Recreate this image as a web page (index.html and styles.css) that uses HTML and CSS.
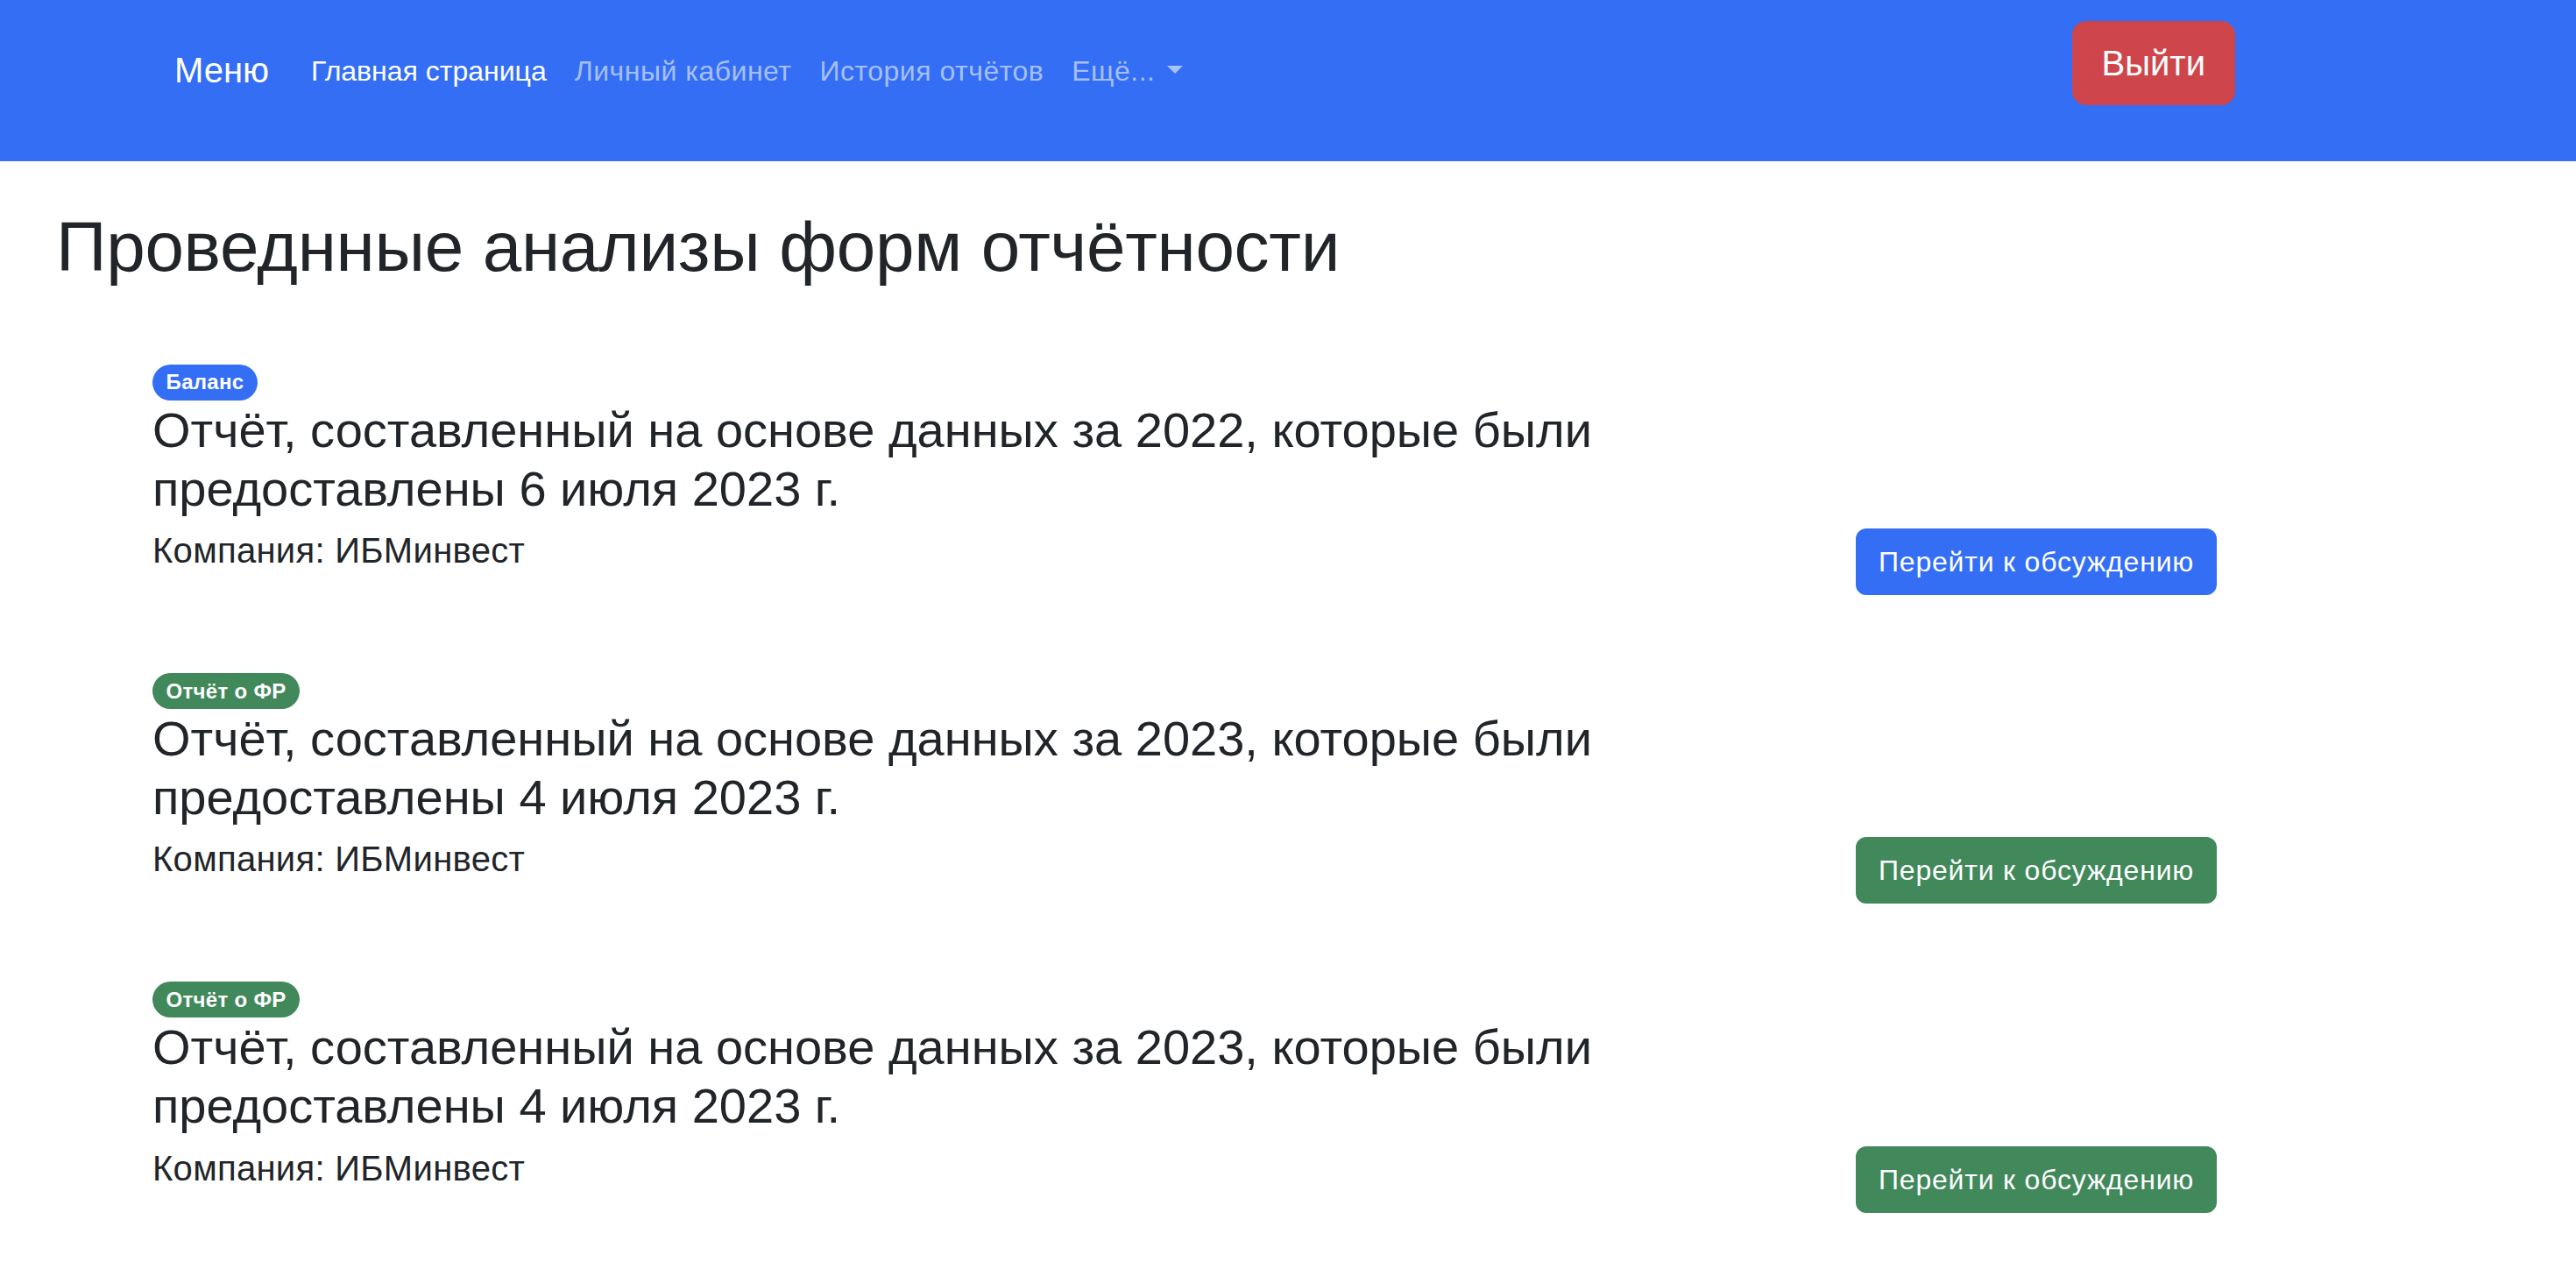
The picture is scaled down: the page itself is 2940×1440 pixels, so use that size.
FILE: index.html
```html
<!DOCTYPE html>
<html lang="ru">
<head>
<meta charset="utf-8">
<title>Проведнные анализы форм отчётности</title>
<link rel="stylesheet" href="styles.css">
</head>
<body>
<nav class="navbar">
  <a class="brand" href="#">Меню</a>
  <ul class="nav-links">
    <li><a class="nav-link active" href="#">Главная страница</a></li>
    <li><a class="nav-link" href="#">Личный кабинет</a></li>
    <li><a class="nav-link" href="#">История отчётов</a></li>
    <li><a class="nav-link dropdown-toggle" href="#">Ещё...</a></li>
  </ul>
  <button class="btn btn-logout" type="button">Выйти</button>
</nav>

<main>
  <h1 class="page-title">Проведнные анализы форм отчётности</h1>

  <div class="reports">
    <div class="report">
      <div class="report-info">
        <span class="badge badge-blue">Баланс</span>
        <h3 class="report-title">Отчёт, составленный на основе данных за 2022, которые были предоставлены 6 июля 2023 г.</h3>
        <h5 class="company">Компания: ИБМинвест</h5>
      </div>
      <div class="report-action">
        <button class="btn btn-go btn-blue" type="button">Перейти к обсуждению</button>
      </div>
    </div>

    <div class="report">
      <div class="report-info">
        <span class="badge badge-green">Отчёт о ФР</span>
        <h3 class="report-title">Отчёт, составленный на основе данных за 2023, которые были предоставлены 4 июля 2023 г.</h3>
        <h5 class="company">Компания: ИБМинвест</h5>
      </div>
      <div class="report-action">
        <button class="btn btn-go btn-green" type="button">Перейти к обсуждению</button>
      </div>
    </div>

    <div class="report">
      <div class="report-info">
        <span class="badge badge-green">Отчёт о ФР</span>
        <h3 class="report-title">Отчёт, составленный на основе данных за 2023, которые были предоставлены 4 июля 2023 г.</h3>
        <h5 class="company">Компания: ИБМинвест</h5>
      </div>
      <div class="report-action">
        <button class="btn btn-go btn-green" type="button">Перейти к обсуждению</button>
      </div>
    </div>
  </div>
</main>
</body>
</html>
```

FILE: styles.css
```css
* { box-sizing: border-box; }

html, body {
  margin: 0;
  padding: 0;
  background: #ffffff;
}

body {
  font-family: "Liberation Sans", Arial, sans-serif;
  color: #212529;
}

.navbar {
  display: flex;
  align-items: flex-start;
  height: 184px;
  padding: 24px 389px 0 199px;
  background: #336ef5;
}

.brand {
  margin-top: 26px;
  margin-right: 32px;
  font-size: 40px;
  line-height: 60px;
  color: #ffffff;
  text-decoration: none;
}

.nav-links {
  display: flex;
  margin: 33px 0 0 0;
  padding: 0;
  list-style: none;
}

.nav-link {
  display: block;
  padding: 0 16px;
  font-size: 32px;
  line-height: 48px;
  letter-spacing: 0.5px;
  color: rgba(255, 255, 255, 0.58);
  text-decoration: none;
}

.nav-link.active {
  color: #ffffff;
  letter-spacing: 0;
}

.dropdown-toggle::after {
  content: "";
  display: inline-block;
  margin-left: 14px;
  vertical-align: 8px;
  border-top: 9.6px solid;
  border-right: 9.6px solid transparent;
  border-left: 9.6px solid transparent;
  border-bottom: 0;
}

.btn {
  font-family: inherit;
  border: 2px solid transparent;
  color: #ffffff;
  cursor: pointer;
}

.btn-logout {
  margin-left: auto;
  padding: 16px 32px;
  font-size: 40px;
  line-height: 60px;
  border-radius: 16px;
  background: #ce464c;
  border-color: #ce464c;
}

.page-title {
  margin: 50px 0 0 64px;
  font-size: 80px;
  line-height: 96px;
  font-weight: 400;
  letter-spacing: -0.3px;
}

.reports {
  margin-top: 86px;
  padding-left: 174px;
}

.report {
  display: grid;
  grid-template-columns: 1712px auto;
  column-gap: 232px;
  align-items: end;
  margin-bottom: 89px;
}

.report-info {
  display: flex;
  flex-direction: column;
  align-items: flex-start;
}

.badge {
  display: inline-block;
  padding: 8.4px 15.6px;
  font-size: 24px;
  line-height: 24px;
  font-weight: 700;
  letter-spacing: 0.3px;
  color: #ffffff;
  border-radius: 50px;
}

.badge-blue { background: #336ef5; }
.badge-green { background: #41885a; }

.report-title {
  margin: 0 0 7px 0;
  font-size: 56px;
  line-height: 67.2px;
  font-weight: 400;
}

.company {
  margin: 0 0 21px 0;
  font-size: 40px;
  line-height: 60px;
  font-weight: 400;
  letter-spacing: 0.3px;
}

.report-action {
  display: flex;
}

.btn-go {
  padding: 12px 24px;
  font-size: 32px;
  line-height: 48px;
  letter-spacing: 0.8px;
  border-radius: 12px;
  white-space: nowrap;
}

.btn-blue { background: #336ef5; border-color: #336ef5; }
.btn-green { background: #41885a; border-color: #41885a; }
```
